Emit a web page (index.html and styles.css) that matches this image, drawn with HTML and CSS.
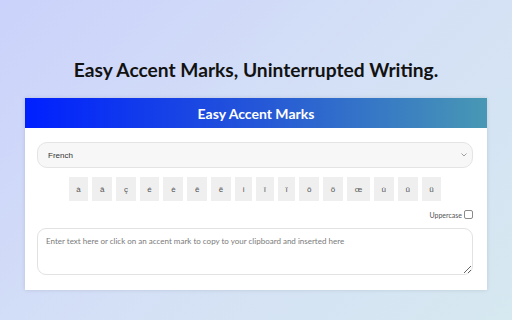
FILE: index.html
```html
<!DOCTYPE html>
<html lang="en">
<head>
    <meta charset="UTF-8">
    <meta name="viewport" content="width=device-width, initial-scale=1.0">
    <title>Easy Accent Marks</title>
    <link rel="stylesheet" href="styles.css">
</head>
<body>
    <h1 class="tagline">Easy Accent Marks, Uninterrupted Writing.</h1>
    <div class="card">
        <div class="card-header">Easy Accent Marks</div>
        <div class="card-body">
            <div class="select-wrap">
                <select class="lang-select">
                    <option>French</option>
                    <option>Spanish</option>
                    <option>German</option>
                </select>
                <svg class="chevron" width="6" height="4" viewBox="0 0 6 4"><path d="M0.5 0.5 L3 3 L5.5 0.5" fill="none" stroke="#888" stroke-width="0.8"/></svg>
            </div>
            <div class="accents">
                <button class="accent">à</button>
                <button class="accent">â</button>
                <button class="accent">ç</button>
                <button class="accent">é</button>
                <button class="accent">è</button>
                <button class="accent">ê</button>
                <button class="accent">ë</button>
                <button class="accent">i</button>
                <button class="accent">î</button>
                <button class="accent">ï</button>
                <button class="accent">ô</button>
                <button class="accent">ö</button>
                <button class="accent">œ</button>
                <button class="accent">ù</button>
                <button class="accent">û</button>
                <button class="accent">ü</button>
            </div>
            <label class="upper">Uppercase <input type="checkbox" class="upper-box"></label>
            <textarea class="editor" placeholder="Enter text here or click on an accent mark to copy to your clipboard and inserted here"></textarea>
        </div>
    </div>
</body>
</html>
```

FILE: styles.css
```css
html, body {
    height: 100%;
}
body {
    margin: 0;
    font-family: Lato, "Open Sans", sans-serif;
    background: linear-gradient(135deg, #cbd2fb 0%, #d4e0f6 50%, #d6e8f0 100%);
    color: #111111;
    display: flex;
    flex-direction: column;
    align-items: center;
    overflow: hidden;
}
.tagline {
    margin: 57px 0 16px;
    font-size: 19.2px;
    line-height: 25px;
    font-weight: 700;
    color: #121212;
}
.card {
    width: 462px;
    background-color: #ffffff;
    box-shadow: 0 0 4px rgba(0, 0, 0, 0.12);
}
.card-header {
    height: 30px;
    line-height: 31px;
    text-align: center;
    color: #ffffff;
    font-size: 14px;
    font-weight: 700;
    background: linear-gradient(90deg, #0020ff 0%, #2456d8 50%, #4898b4 100%);
}
.card-body {
    padding: 14px 14px 15px 12px;
    display: flex;
    flex-direction: column;
}
.select-wrap {
    position: relative;
    height: 26px;
}
.lang-select {
    display: block;
    appearance: none;
    -webkit-appearance: none;
    width: 100%;
    height: 26px;
    padding: 0 10px;
    border: 1px solid #e4e4e4;
    border-radius: 10px;
    background-color: #f7f7f7;
    font-family: "Liberation Sans", Arial, sans-serif;
    font-size: 8px;
    color: #333333;
    outline: none;
}
.chevron {
    position: absolute;
    right: 6px;
    top: 11px;
}
.accents {
    display: flex;
    justify-content: center;
    gap: 4px;
    margin-top: 9px;
}
.accent {
    height: 24px;
    padding: 0 7.7px;
    border: none;
    border-radius: 0;
    background-color: #efefef;
    font-family: "Liberation Sans", Arial, sans-serif;
    font-size: 8px;
    color: #555555;
    cursor: pointer;
}
.upper {
    align-self: flex-end;
    display: flex;
    align-items: center;
    gap: 2px;
    margin-top: 9px;
    height: 9px;
    font-size: 7px;
    color: #555555;
}
.upper-box {
    appearance: none;
    -webkit-appearance: none;
    width: 9px;
    height: 9px;
    margin: 0;
    border: 1px solid #8a8a8a;
    border-radius: 2px;
    background-color: #ffffff;
}
.editor {
    display: block;
    margin-top: 9px;
    height: 47px;
    box-sizing: border-box;
    padding: 7px 8px;
    border: 1px solid #e2e2e2;
    border-radius: 9px;
    font-family: Lato, sans-serif;
    font-size: 8px;
    color: #333333;
    outline: none;
    resize: vertical;
}
.editor::placeholder {
    color: #7a7a7a;
}
```
